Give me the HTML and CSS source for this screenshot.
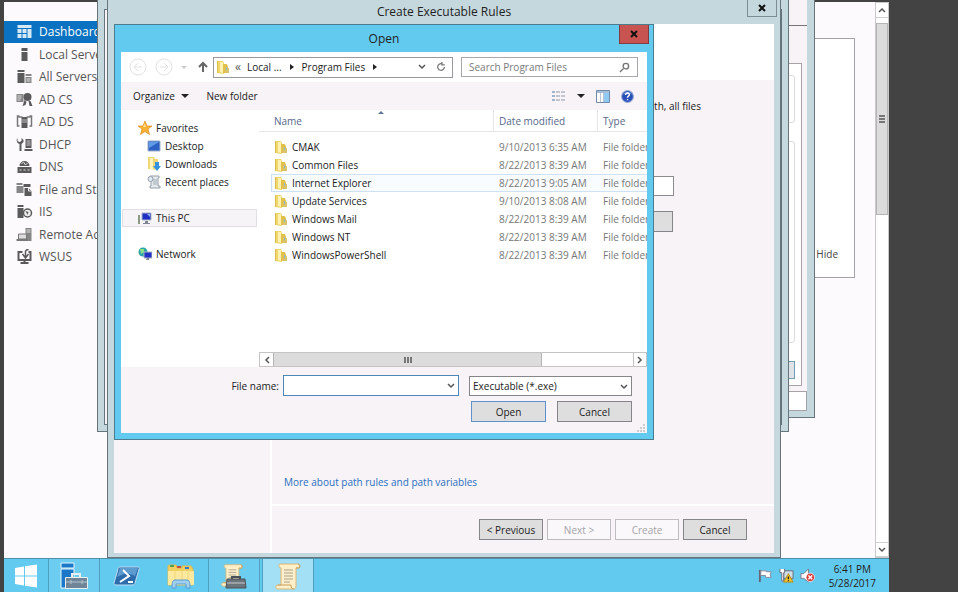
FILE: index.html
```html
<!DOCTYPE html>
<html lang="en">
<head>
    <meta charset="UTF-8">
    <title>Create Executable Rules</title>
    <link rel="stylesheet" href="styles.css">
</head>

<body>
<svg class="sprite" aria-hidden="true">
    <symbol id="folder" viewBox="0 0 12 14">
        <path d="M0 1h6l1 2v11l-7-1z" fill="#f0d76c"/>
        <path d="M0 1h1v12H0z" fill="#dcbc4e"/>
        <path d="M3 2h3v11l-3-1z" fill="#fdf2b4"/>
        <path d="M6 4h4l1 3v6H6z" fill="#e2c04c"/>
        <path d="M8 8h4v5H8z" fill="#d8c26a"/>
        <path d="M9 7h1v3H9z" fill="#8fb7c4"/>
    </symbol>
    <symbol id="down" viewBox="0 0 8 8">
        <path d="M1 2l3 3 3-3" fill="none" stroke="currentColor" stroke-width="1.5"/>
    </symbol>
    <symbol id="scroll" viewBox="0 0 28 28">
        <path d="M6 2h18c2 0 2 4 0 4h-2v18c0 3-2 3-3 3H4c-3 0-3-4 0-4h3V6C5 6 4 3 6 2z" fill="#fcefc9" stroke="#d9b878"/>
        <path d="M22 6h3c2-1 1-4-1-4M4 23h13c0 3 1 4 3 4" fill="none" stroke="#c99f58"/>
        <path d="M10 8h9M10 11h9M10 14h9M10 17h9M10 20h6" stroke="#a8a08c"/>
    </symbol>
</svg>
<div class="screen">
    <div class="desktop">
        <div class="manager">
            <ul class="side">
                <li class="side-active"><a href="#">
                    <svg viewBox="0 0 16 16"><path d="M1 1h14v3H1zM1 5h4v4H1zM6 5h4v4H6zM11 5h4v9h-4zM1 10h4v4H1zM6 10h4v4H6z" fill="#d3e9f8"/></svg>
                    Dashboard</a></li>
                <li><a href="#">
                    <svg viewBox="0 0 16 16"><path d="M5 1h6v3H5zM5 5h6v9H5z"/></svg>
                    Local Server</a></li>
                <li><a href="#">
                    <svg viewBox="0 0 16 16"><path d="M1 1h7v2H1zM1 4h7v10H1z"/><path d="M9 5h6v2H9zM9 8h6v6H9z" fill="#858585"/><path d="M10 10h4M10 12h4" stroke="#ddd"/></svg>
                    All Servers</a></li>
                <li><a href="#">
                    <svg viewBox="0 0 16 16"><path d="M0 2h7v8H0z" fill="#858585"/><path d="M1 4h4M1 6h4M1 8h3" stroke="#ddd"/><circle cx="11" cy="5" r="4"/><path d="M8 8l-2 6 3-1 1-3zM12 9l1 5 3 0-2-5z"/></svg>
                    AD CS</a></li>
                <li><a href="#">
                    <svg viewBox="0 0 16 16"><path d="M5 3h6v11H5z"/><path d="M5 6h6M5 8h6" stroke="#bbb"/><path d="M3 2H1v10h2M13 2h2v10h-2M2 3h4M10 3h4" fill="none" stroke="#777" stroke-width="1.500"/></svg>
                    AD DS</a></li>
                <li><a href="#">
                    <svg viewBox="0 0 16 16"><path d="M1 1v3l2 1 2-1V1l2 2v2L5 7v7H3V7L1 6 0 3z"/><path d="M9 2h6v9H9zM8 12h8v2H8z"/><path d="M10 4h4M10 6h4M10 8h4" stroke="#ccc"/></svg>
                    DHCP</a></li>
                <li><a href="#">
                    <svg viewBox="0 0 16 16"><path d="M3 7a5 5 0 0 1 10 0zM1 8h14v6H1z"/><path d="M5 5l2-2 2 3 2-2M3 11h2M7 11h2M11 11h2" stroke="#ddd" fill="none"/></svg>
                    DNS</a></li>
                <li><a href="#">
                    <svg viewBox="0 0 16 16"><path d="M0 1h6v2H0zM0 4h7v7H0z" fill="#858585"/><path d="M7 2h7v3H7z"/><path d="M8 6h4l3 3v5H8z"/><path d="M12 6v3h3" stroke="#eee" fill="none"/></svg>
                    File and Storage</a></li>
                <li><a href="#">
                    <svg viewBox="0 0 16 16"><path d="M1 1h6v2H1zM1 4h6v10H1z"/><circle cx="11" cy="9" r="4" fill="#eee" stroke="#5a5a5a" stroke-width="1.5"/><path d="M9 7l3 1-1 3z"/></svg>
                    IIS</a></li>
                <li><a href="#">
                    <svg viewBox="0 0 16 16"><path d="M9 1h6v13H9z" fill="#858585"/><path d="M10 3h4M10 5h4" stroke="#ddd"/><path d="M2 7h8v5H2z" fill="#ddd" stroke="#777"/><path d="M0 12h11v2H0z" fill="#777"/></svg>
                    Remote Access</a></li>
                <li><a href="#">
                    <svg viewBox="0 0 16 16"><path d="M6 3H2v8h12V3h-2M8 11v3M4 14h8" fill="none" stroke="#5a5a5a" stroke-width="2"/><path d="M9 8V3a2 2 0 0 1 3-2M6 5l3 4 3-4" fill="none" stroke="#5a5a5a" stroke-width="1.5"/></svg>
                    WSUS</a></li>
            </ul>
            <div class="main">
                <div class="welcome"><a href="#">Hide</a></div>
            </div>
            <div class="vscroll">
                <button aria-label="Scroll up"><svg class="arrow flip"><use href="#down"/></svg></button>
                <div class="vthumb"><i></i><i></i><i></i></div>
                <button class="last" aria-label="Scroll down"><svg class="arrow"><use href="#down"/></svg></button>
            </div>
        </div>

        <div class="window policy">
            <div class="policy-head"></div>
            <div class="policy-tab">
                <div class="group"></div>
                <div class="group group-big"></div>
                <button aria-label="Apply"></button>
            </div>
            <div class="policy-foot"></div>
        </div>
        <div class="window editor"><div class="editor-body"></div></div>

        <div class="window wizard">
            <div class="titlebar">
                <h1>Create Executable Rules</h1>
                <button class="close" aria-label="Close wizard"><svg viewBox="0 0 8 8"><path d="M1 1l6 6M7 1L1 7"/></svg></button>
            </div>
            <div class="wizard-body">
                <div class="wizard-head"></div>
                <div class="wizard-cols">
                    <div class="steps"></div>
                    <div class="page">
                        <div class="page-content">
                            <p>path, all files</p>
                            <input type="text" aria-label="Path">
                            <button class="btn" aria-label="Browse Folders"></button>
                            <a href="#">More about path rules and path variables</a>
                        </div>
                        <div class="page-foot">
                            <button class="btn">&lt; Previous</button>
                            <button class="btn" disabled>Next &gt;</button>
                            <button class="btn" disabled>Create</button>
                            <button class="btn">Cancel</button>
                        </div>
                    </div>
                </div>
            </div>
        </div>

        <div class="window open">
            <div class="titlebar">
                <h2>Open</h2>
                <button class="close close-red" aria-label="Close"><svg viewBox="0 0 8 8"><path d="M1 1l6 6M7 1L1 7"/></svg></button>
            </div>
            <div class="open-body">
                <div class="address">
                    <button class="nav-btn" aria-label="Back"><svg viewBox="0 0 18 18"><circle cx="9" cy="9" r="8"/><path d="M13 9H5M9 5L5 9l4 4"/></svg></button>
                    <button class="nav-btn" aria-label="Forward"><svg viewBox="0 0 18 18"><circle cx="9" cy="9" r="8"/><path d="M5 9h8M9 5l4 4-4 4"/></svg></button>
                    <i class="tri tri-pale"></i>
                    <button class="up" aria-label="Up"><svg viewBox="0 0 12 12"><path d="M6 11V2M2 6l4-4 4 4"/></svg></button>
                    <div class="crumbs">
                        <svg class="folder"><use href="#folder"/></svg>
                        <span class="chev">«</span>
                        <a href="#">Local ...</a>
                        <i class="tri-right"></i>
                        <a href="#">Program Files</a>
                        <i class="tri-right"></i>
                        <span class="crumb-end">
                            <svg class="arrow"><use href="#down"/></svg>
                            <svg class="refresh" viewBox="0 0 12 12"><path d="M8 2.500A4 4 0 1 0 10 6M7 0v3.500h3.500"/></svg>
                        </span>
                    </div>
                    <div class="search">
                        <input type="text" placeholder="Search Program Files" aria-label="Search Program Files">
                        <svg viewBox="0 0 12 12"><circle cx="7.500" cy="4.500" r="3"/><path d="M5 7l-4 4"/></svg>
                    </div>
                </div>
                <div class="toolbar">
                    <button>Organize <i class="tri"></i></button>
                    <button>New folder</button>
                    <div class="tools">
                        <svg class="view" viewBox="0 0 14 12"><path d="M0 1h3v2H0zM0 5h3v2H0zM0 9h3v2H0z" fill="#9fb4cc"/><path d="M4 2h4M9 2h4M4 6h4M9 6h4M4 10h4M9 10h4" stroke="#8d97a3"/></svg>
                        <i class="tri"></i>
                        <svg class="pane" viewBox="0 0 14 13"><path d="M.5.5h13v12H.5z" fill="#fff" stroke="#7389a8"/><path d="M1 1h12v2H1z" fill="#a6bdd8"/><path d="M8 3h5v9H8z" fill="#8fcaf5"/><path d="M4.500 3v9M7.500 3v9" stroke="#b9c5d3"/></svg>
                        <svg class="help" viewBox="0 0 12 12"><circle cx="6" cy="6" r="5.500" fill="#2a50b8" stroke="#9fb0d8"/><path d="M2 4a4.500 4.500 0 0 1 8 0z" fill="#6f92e0"/><path d="M4.300 4.500c0-2.300 3.600-2.200 3.400 0C7.600 5.600 6 5.600 6 7.200M6 8.300v1.200" fill="none" stroke="#fff" stroke-width="1.300"/></svg>
                    </div>
                </div>
                <div class="browse">
                    <ul class="tree">
                        <li><a href="#"><svg viewBox="0 0 14 14"><path d="M7 0l2 5h5l-4 3 1.500 5.500L7 10.500l-4.500 3L4 8 0 5h5z" fill="#f9b233" stroke="#dd8a1c" stroke-width=".7"/><path d="M7 2.500l1 3.500H5z" fill="#fde39a"/></svg>Favorites</a></li>
                        <li class="sub"><a href="#"><svg viewBox="0 0 14 14"><path d="M1 2h12v10H1z" fill="#2c62c4" stroke="#9db0c9"/><path d="M2 3h10L2 9z" fill="#5f9be6"/></svg>Desktop</a></li>
                        <li class="sub"><a href="#"><svg viewBox="0 0 14 14"><path d="M1 0h6l1 2h3v11L1 12z" fill="#f0d878"/><path d="M3 1h3v11H3z" fill="#fdf3bd"/><path d="M8 5h4v4h2l-4 5-4-5h2z" fill="#3593dd"/></svg>Downloads</a></li>
                        <li class="sub"><a href="#"><svg viewBox="0 0 14 14"><path d="M3 1h9v2h-1v8h2v2H3v-2h1V4H2z" fill="#e4eaee" stroke="#93a0a8"/><path d="M6 5h4M6 7h4M6 9h4" stroke="#9aa9b3"/><circle cx="3.500" cy="4" r="2.500" fill="#dfeef2" stroke="#99a"/></svg>Recent places</a></li>
                        <li class="spaced selected"><a href="#"><svg viewBox="0 0 14 14"><path d="M0 4h2v9H0z" fill="#8b9a84"/><path d="M4 2h9v7H4z" fill="#1f2fc4" stroke="#a9b4c4"/><path d="M9 3h3v3z" fill="#8fb0f4"/><path d="M7 10h3v2H7zM5 12h7v1H5z" fill="#7d8794"/></svg>This PC</a></li>
                        <li class="spaced"><a href="#"><svg viewBox="0 0 14 14"><circle cx="5" cy="5" r="4.500" fill="#2ba5a8"/><path d="M2 2l4 0 0 3-3 2z" fill="#8ce08a"/><path d="M6 5h8v6H6z" fill="#1f2fc4" stroke="#a9b4c4"/><path d="M9 11h2v2H8z" fill="#7d8794"/></svg>Network</a></li>
                    </ul>
                    <div class="list">
                        <table>
                            <thead>
                            <tr><th class="c-name">Name<i class="sort"></i></th><th class="c-date">Date modified</th><th>Type</th></tr>
                            </thead>
                            <tbody>
                            <tr><td><svg class="folder"><use href="#folder"/></svg>CMAK</td><td>9/10/2013 6:35 AM</td><td>File folder</td></tr>
                            <tr><td><svg class="folder"><use href="#folder"/></svg>Common Files</td><td>8/22/2013 8:39 AM</td><td>File folder</td></tr>
                            <tr class="hover"><td><svg class="folder"><use href="#folder"/></svg>Internet Explorer</td><td>8/22/2013 9:05 AM</td><td>File folder</td></tr>
                            <tr><td><svg class="folder"><use href="#folder"/></svg>Update Services</td><td>9/10/2013 8:08 AM</td><td>File folder</td></tr>
                            <tr><td><svg class="folder"><use href="#folder"/></svg>Windows Mail</td><td>8/22/2013 8:39 AM</td><td>File folder</td></tr>
                            <tr><td><svg class="folder"><use href="#folder"/></svg>Windows NT</td><td>8/22/2013 8:39 AM</td><td>File folder</td></tr>
                            <tr><td><svg class="folder"><use href="#folder"/></svg>WindowsPowerShell</td><td>8/22/2013 8:39 AM</td><td>File folder</td></tr>
                            </tbody>
                        </table>
                        <div class="hscroll">
                            <button aria-label="Scroll left"><svg class="arrow left"><use href="#down"/></svg></button>
                            <div class="hthumb"><i></i><i></i><i></i></div>
                            <button class="last" aria-label="Scroll right"><svg class="arrow right"><use href="#down"/></svg></button>
                        </div>
                    </div>
                </div>
                <form class="file-form">
                    <div class="fields">
                        <label for="file-name">File name:</label>
                        <div class="combo">
                            <input type="text" id="file-name">
                            <svg class="arrow"><use href="#down"/></svg>
                        </div>
                        <div class="combo filter">
                            <select aria-label="File type"><option>Executable (*.exe)</option></select>
                            <svg class="arrow"><use href="#down"/></svg>
                        </div>
                    </div>
                    <div class="actions">
                        <button type="button" class="btn btn-default">Open</button>
                        <button type="button" class="btn">Cancel</button>
                    </div>
                    <svg class="grip" viewBox="0 0 8 8"><path d="M6 0h2v2H6zM6 3h2v2H6zM6 6h2v2H6zM3 3h2v2H3zM3 6h2v2H3zM0 6h2v2H0z"/></svg>
                </form>
            </div>
        </div>
    </div>

    <div class="taskbar">
        <button class="start" aria-label="Start"><svg viewBox="0 0 24 24"><path d="M1 4l9-1.500v9H1zM11 2.300L23 .5v11H11zM1 12.500h9v9L1 20zM11 12.500h12v11l-12-1.800z" fill="#fff"/></svg></button>
        <button class="task running" aria-label="Server Manager"><svg viewBox="0 0 28 28"><path d="M1 1h13v5H1zM1 7h13v19H1z" fill="#1b78c8" stroke="#e6f5fd"/><path d="M12 15v-3h8v3" fill="none" stroke="#e8eef2" stroke-width="2"/><path d="M5.500 15.500h22v11h-22z" fill="#6f8597" stroke="#e8eef2"/><path d="M6 20h21M11 18v4M22 18v4" stroke="#b5c3cd"/></svg></button>
        <button class="task" aria-label="PowerShell"><svg viewBox="0 0 28 28"><path d="M7 5h18c1 0 2 1 1 2l-4 14c0 1-1 2-3 2H3c-2 0-2-1-2-2L5 7c0-1 1-2 2-2z" fill="#2c6cab" stroke="#bfdcf1"/><path d="M7 6h18l-3 8C15 10 10 12 4 15z" fill="#5c9bd0"/><path d="M10 8l6 6-9 6M15 20h5" fill="none" stroke="#fff" stroke-width="2"/></svg></button>
        <button class="task" aria-label="File Explorer"><svg viewBox="0 0 28 28"><path d="M1 5c0-2 1-2 2-2h6l1 3h5V4h9l2 3v16H1z" fill="#f0cf62" stroke="#dfb94a"/><path d="M3 3h4v2H3z" fill="#4ba04b"/><path d="M10 4h4v2h-4z" fill="#c8503a"/><path d="M18 5h4v2h-4z" fill="#3b79c8"/><path d="M1 9h26v14H1z" fill="#fbe9a0"/><path d="M8 9v9M15 9v9M21 9v9" stroke="#f2d774"/><path d="M5 26c0-4 0-8 3-8h12c3 0 3 4 3 8h-4v-4H9v4z" fill="#9fd0f0" stroke="#5a9cd0"/></svg></button>
        <button class="task running" aria-label="Local Security Policy"><svg viewBox="0 0 28 28"><use href="#scroll" width="24" height="26"/><path d="M12 17v-2h8v2" fill="none" stroke="#4a5258" stroke-width="2"/><path d="M7 17h18l1 9H6z" fill="#6c757c" stroke="#4a5258"/><path d="M7 21h18" stroke="#c8cdd0"/></svg></button>
        <button class="task running current" aria-label="AppLocker"><svg viewBox="0 0 28 28"><use href="#scroll" width="28" height="28"/></svg></button>
        <div class="tray">
            <svg viewBox="0 0 16 16"><path d="M2 2v13" stroke="#667" stroke-width="2"/><path d="M3 3h6v1h5l-1 3 1 3H8V8H3z" fill="#fff" stroke="#889"/></svg>
            <svg viewBox="0 0 16 16"><path d="M5 3h10v8H5z" fill="#cfe0e8" stroke="#667"/><path d="M1 1v4h2v9h2V5h1V1" fill="#fff" stroke="#667"/><path d="M10 6l5 9H5z" fill="#f9c62b" stroke="#b98a10"/><path d="M10 9v3M10 13v1" stroke="#222" stroke-width="1.500"/></svg>
            <svg viewBox="0 0 16 16"><path d="M1 6h3l5-5v14l-5-4H1z" fill="#fff" stroke="#778"/><circle cx="11" cy="10" r="4.500" fill="#dc3c3c" stroke="#fff" stroke-width=".7"/><path d="M9 8l4 4M13 8l-4 4" stroke="#fff" stroke-width="1.500"/></svg>
            <div class="clock">6:41 PM<br>5/28/2017</div>
        </div>
    </div>
</div>
</body>
</html>
```
FILE: styles.css
```css
body,ul,h1,h2,p{
    padding: 0;
    margin: 0;
}
*{
    box-sizing: border-box;
}
body{
    background-color: #434343;
    font: 10px/18px "Open Sans","Noto Sans",sans-serif;
    color: #222;
}
ul{
    list-style: none;
}
a{
    color: inherit;
    text-decoration: none;
}
button,input,select{
    margin: 0;
    padding: 0;
    border: none;
    border-radius: 0;
    background: none;
    font: inherit;
    color: inherit;
    outline: none;
}
svg{
    display: block;
    flex: none;
}
.sprite{
    position: absolute;
    width: 0;
    height: 0;
}
.screen{
    display: flex;
    flex-direction: column;
    height: 100vh;
    margin: 0 69px 0 4px;
    overflow: hidden;
}
.desktop{
    position: relative;
    flex: 1;
    min-height: 0;
    padding-top: 2px;
}

/* server manager */
.manager{
    display: flex;
    height: 100%;
    background-color: #fdfafe;
}
.side{
    width: 103px;
    padding-top: 19px;
    font-size: 12px;
    line-height: 22px;
    color: #555;
    white-space: nowrap;
}
.side li{
    padding-left: 12px;
}
.side li:nth-child(odd){
    margin-bottom: 1px;
}
.side a{
    display: flex;
    align-items: center;
    gap: 6px;
}
.side svg{
    width: 17px;
    height: 16px;
    fill: #5a5a5a;
}
.side .side-active{
    background-color: #0a72c0;
    color: #fff;
}
.main{
    flex: 1;
    padding: 36px 20px 0;
}
.welcome{
    display: flex;
    justify-content: flex-end;
    align-items: flex-end;
    height: 240px;
    padding: 0 16px 14px 0;
    border: 1px solid #a5a3a7;
    background-color: #fff;
    color: #444;
}
.vscroll{
    display: flex;
    flex-direction: column;
    width: 14px;
    background-color: #fff;
    border: 1px solid #c9c9c9;
}
.vscroll button{
    display: flex;
    justify-content: center;
    align-items: center;
    height: 15px;
    border-bottom: 1px solid #d0d0d0;
}
.vscroll .last{
    margin-top: auto;
    border-top: 1px solid #d0d0d0;
}
.vthumb{
    display: flex;
    flex-direction: column;
    align-items: center;
    justify-content: center;
    gap: 1px;
    height: 192px;
    margin-top: 5px;
    background-color: #dcdcdc;
    border: 1px solid #b5b5b5;
}
.vthumb i{
    width: 6px;
    height: 2px;
    background-color: #777;
}
.arrow{
    width: 8px;
    height: 8px;
    color: #555;
}
.flip{
    transform: rotate(180deg);
}
.left{
    transform: rotate(90deg);
}
.right{
    transform: rotate(-90deg);
}

/* windows */
.window{
    position: absolute;
    display: flex;
    flex-direction: column;
    background-color: #c5d8de;
    border: 1px solid #66757b;
}
.policy{
    top: -1px;
    left: 101px;
    width: 710px;
    height: 419px;
    padding: 0 7px 6px;
}
.policy-head{
    height: 26px;
    background-color: #f7f3f7;
    border-bottom: 1px solid #77757a;
}
.policy-tab{
    display: flex;
    flex-direction: column;
    align-items: flex-end;
    gap: 18px;
    flex: 1;
    padding: 12px 7px 7px;
    background-color: #fff;
    border-top: 37px solid #f7f3f7;
    border-right: 5px solid #f7f3f7;
    box-shadow: inset -1px 1px #a5a3a7, inset 0 -1px #a5a3a7;
}
.group{
    width: 100%;
    height: 48px;
    border: 1px solid #dedbe0;
    border-radius: 3px;
}
.group-big{
    flex: 1;
}
.policy-tab button{
    width: 60px;
    height: 18px;
    background-color: #dde3e6;
    border: 1px solid #6f9dba;
}
.policy-foot{
    height: 20px;
    background-color: #fff;
    border: 1px solid #a5a3a7;
    box-shadow: 0 -5px #f7f3f7;
    margin-top: 5px;
}
.editor{
    top: -1px;
    left: 93px;
    width: 692px;
    height: 433px;
    padding: 9px 6px 6px;
}
.editor-body{
    flex: 1;
    background-color: #f7f3f7;
    border: 1px solid #66757b;
}
.wizard{
    top: -1px;
    bottom: 0;
    left: 103px;
    width: 674px;
    padding: 0 6px 4px;
}
.titlebar{
    position: relative;
}
.titlebar h1,.titlebar h2{
    font-size: 12px;
    line-height: 24px;
    font-weight: normal;
    text-align: center;
}
.close{
    position: absolute;
    top: 0;
    right: -3px;
    display: flex;
    justify-content: center;
    align-items: center;
    width: 30px;
    height: 17px;
    border: 1px solid #7d8d94;
    border-top: none;
}
.close svg{
    width: 8px;
    height: 8px;
    stroke: #111;
    stroke-width: 2;
}
.close-red{
    right: -2px;
    height: 19px;
    background-color: #c75450;
    border-color: #803c40;
}
.wizard-body{
    display: flex;
    flex-direction: column;
    flex: 1;
    background-color: #f7f3f7;
}
.wizard-head{
    height: 56px;
    background-color: #fff;
}
.wizard-cols{
    display: flex;
    flex: 1;
}
.steps{
    flex: none;
    width: 158px;
    border-right: 2px solid #fff;
}
.page{
    display: flex;
    flex-direction: column;
    flex: 1;
    min-width: 0;
}
.page-content{
    display: flex;
    flex-direction: column;
    flex: 1;
    padding: 17px 73px 13px 12px;
    border-bottom: 2px solid #fff;
}
.page-content p{
    text-align: right;
}
.page-content input{
    height: 20px;
    margin: 61px 27px 0 0;
    background-color: #fff;
    border: 1px solid #8d8b90;
}
.page-content .btn{
    align-self: flex-end;
    margin: 15px 28px 0 0;
}
.page-content a{
    margin-top: auto;
    color: #2a6fc0;
}
.page-foot{
    display: flex;
    justify-content: flex-end;
    gap: 4px;
    padding: 13px 27px 13px 0;
}
.page-foot .btn{
    width: 64px;
}
.btn{
    width: 75px;
    height: 21px;
    background-color: #dedede;
    border: 1px solid #85858a;
}
.btn:disabled{
    background-color: #faf8fb;
    border-color: #bfbdc1;
    color: #a5a3a7;
}
.btn-default{
    border-color: #5f92cc;
}

/* open dialog */
.open{
    top: 24px;
    left: 110px;
    width: 540px;
    padding: 0 6px 6px;
    background-color: #62caef;
    border-color: #4b7c90;
}
.open h2{
    line-height: 27px;
}
.open-body{
    background-color: #fff;
}
.address{
    display: flex;
    align-items: center;
    height: 30px;
    padding: 0 9px 0 8px;
}
.nav-btn{
    width: 18px;
    margin-right: 8px;
}
.nav-btn svg{
    width: 18px;
    height: 18px;
    fill: none;
    stroke: #e2e2e2;
}
.tri{
    display: inline-block;
    border: 4px solid transparent;
    border-top-color: #222;
    border-bottom: none;
}
.tri-pale{
    border-width: 3px;
    border-top-color: #ccc;
}
.up{
    margin: 0 4px 0 10px;
}
.up svg{
    width: 12px;
    height: 12px;
    fill: none;
    stroke: #666;
    stroke-width: 2;
}
.crumbs{
    display: flex;
    align-items: center;
    width: 240px;
    height: 21px;
    padding: 0 6px 0 3px;
    border: 1px solid #9a989c;
}
.folder{
    width: 12px;
    height: 14px;
}
.chev{
    margin: 0 6px;
    font-size: 12px;
    color: #555;
}
.tri-right{
    margin: 0 8px;
    border: 3px solid transparent;
    border-left: 4px solid #222;
    border-right: none;
}
.crumb-end{
    display: flex;
    align-items: center;
    gap: 10px;
    margin-left: auto;
}
.refresh{
    width: 10px;
    height: 10px;
    fill: none;
    stroke: #777;
    stroke-width: 1.5;
}
.search{
    display: flex;
    align-items: center;
    flex: 1;
    height: 20px;
    margin-left: 8px;
    padding: 0 7px;
    border: 1px solid #a9a7ab;
}
.search input{
    flex: 1;
    min-width: 0;
}
.search input::placeholder{
    color: #7a7a7a;
}
.search svg{
    width: 11px;
    height: 11px;
    fill: none;
    stroke: #777;
    stroke-width: 1.5;
}
.toolbar{
    display: flex;
    align-items: center;
    gap: 17px;
    height: 28px;
    padding: 0 13px 0 12px;
    background-color: #f7f3f7;
}
.toolbar button .tri{
    margin: 0 0 2px 4px;
}
.tools{
    display: flex;
    align-items: center;
    gap: 11px;
    margin-left: auto;
}
.view{
    width: 14px;
    height: 12px;
}
.pane{
    width: 14px;
    height: 13px;
}
.help{
    width: 13px;
    height: 13px;
}
.browse{
    display: flex;
    height: 257px;
}
.tree{
    flex: none;
    width: 138px;
    padding: 9px 2px 0 1px;
}
.tree li{
    padding-left: 15px;
    border: 1px solid transparent;
    line-height: 16px;
}
.tree .sub{
    padding-left: 24px;
}
.tree .spaced{
    margin-top: 18px;
}
.tree .selected{
    background-color: #f7f4f8;
    border-color: #e2dfe4;
}
.tree a{
    display: flex;
    align-items: center;
    gap: 4px;
}
.tree svg{
    width: 14px;
    height: 14px;
}
.list{
    display: flex;
    flex-direction: column;
    flex: 1;
    min-width: 0;
    overflow: hidden;
}
table{
    table-layout: fixed;
    width: 100%;
    border-collapse: separate;
    border-spacing: 0;
    white-space: nowrap;
}
th{
    position: relative;
    height: 22px;
    padding: 0 0 0 5px;
    border-right: 1px solid #e4e6ea;
    border-bottom: 1px solid #e4e6ea;
    font-weight: normal;
    text-align: left;
    color: #56688a;
}
th:last-child{
    border-right: none;
}
.c-name{
    width: 235px;
    padding-left: 15px;
}
.c-date{
    width: 104px;
}
.sort{
    position: absolute;
    top: 1px;
    left: 51%;
    border: 3px solid transparent;
    border-top: none;
    border-bottom-color: #5d7896;
}
tbody::before{
    content: "";
    display: block;
    height: 6px;
}
td{
    height: 18px;
    padding: 0 0 0 5px;
    line-height: 16px;
    border: 1px solid transparent;
    border-width: 1px 0;
    color: #777;
    overflow: hidden;
}
td:first-child{
    display: flex;
    align-items: center;
    gap: 5px;
    margin-left: 12px;
    padding-left: 3px;
    border-left-width: 1px;
    color: #222;
}
.hover td{
    background-color: #f9fcff;
    border-color: #cfe2f5;
}
.hscroll{
    display: flex;
    height: 15px;
    margin-top: auto;
    border: 1px solid #c4c4c4;
}
.hscroll button{
    display: flex;
    justify-content: center;
    align-items: center;
    width: 13px;
}
.hscroll .last{
    margin-left: auto;
    border-left: 1px solid #c4c4c4;
}
.hthumb{
    display: flex;
    align-items: center;
    justify-content: center;
    gap: 1px;
    width: 269px;
    background-color: #dcdcdc;
    border: 1px solid #b5b5b5;
    border-width: 0 1px;
}
.hthumb i{
    width: 2px;
    height: 6px;
    background-color: #777;
}
.file-form{
    position: relative;
    padding: 8px 15px 11px;
    background-color: #f7f3f7;
}
.fields,.actions{
    display: flex;
    justify-content: flex-end;
    align-items: center;
}
.combo{
    position: relative;
    width: 176px;
    height: 21px;
    margin-left: 4px;
    background-color: #fff;
    border: 1px solid #4f86b8;
}
.combo input,.combo select{
    display: block;
    width: 100%;
    height: 100%;
    padding: 0 3px;
    appearance: none;
}
.combo .arrow{
    position: absolute;
    top: 6px;
    right: 3px;
    pointer-events: none;
}
.filter{
    width: 163px;
    height: 20px;
    margin-left: 10px;
    border-color: #85858a;
}
.actions{
    gap: 11px;
    margin-top: 5px;
}
.grip{
    position: absolute;
    right: 2px;
    bottom: 1px;
    width: 8px;
    height: 8px;
    fill: #cfccd1;
}

/* taskbar */
.taskbar{
    display: flex;
    height: 34px;
    background-color: #62caef;
    border-top: 1px solid #4f8fa8;
}
.taskbar button{
    display: flex;
    justify-content: center;
    align-items: center;
}
.start{
    width: 44px;
}
.start svg{
    width: 24px;
    height: 24px;
}
.task{
    width: 54px;
}
.task svg{
    width: 28px;
    height: 28px;
}
.running{
    width: 52px;
    border: 1px solid #4f9fbf;
    border-width: 0 1px;
    background-color: #6ccdf0;
}
.current{
    margin-left: 2px;
    background-color: #a3e0f6;
}
.tray{
    display: flex;
    align-items: center;
    gap: 6px;
    margin-left: auto;
    padding-right: 13px;
    line-height: 14px;
    text-align: center;
}
.tray svg{
    width: 15px;
    height: 15px;
}
.clock{
    margin-left: 8px;
}
```
